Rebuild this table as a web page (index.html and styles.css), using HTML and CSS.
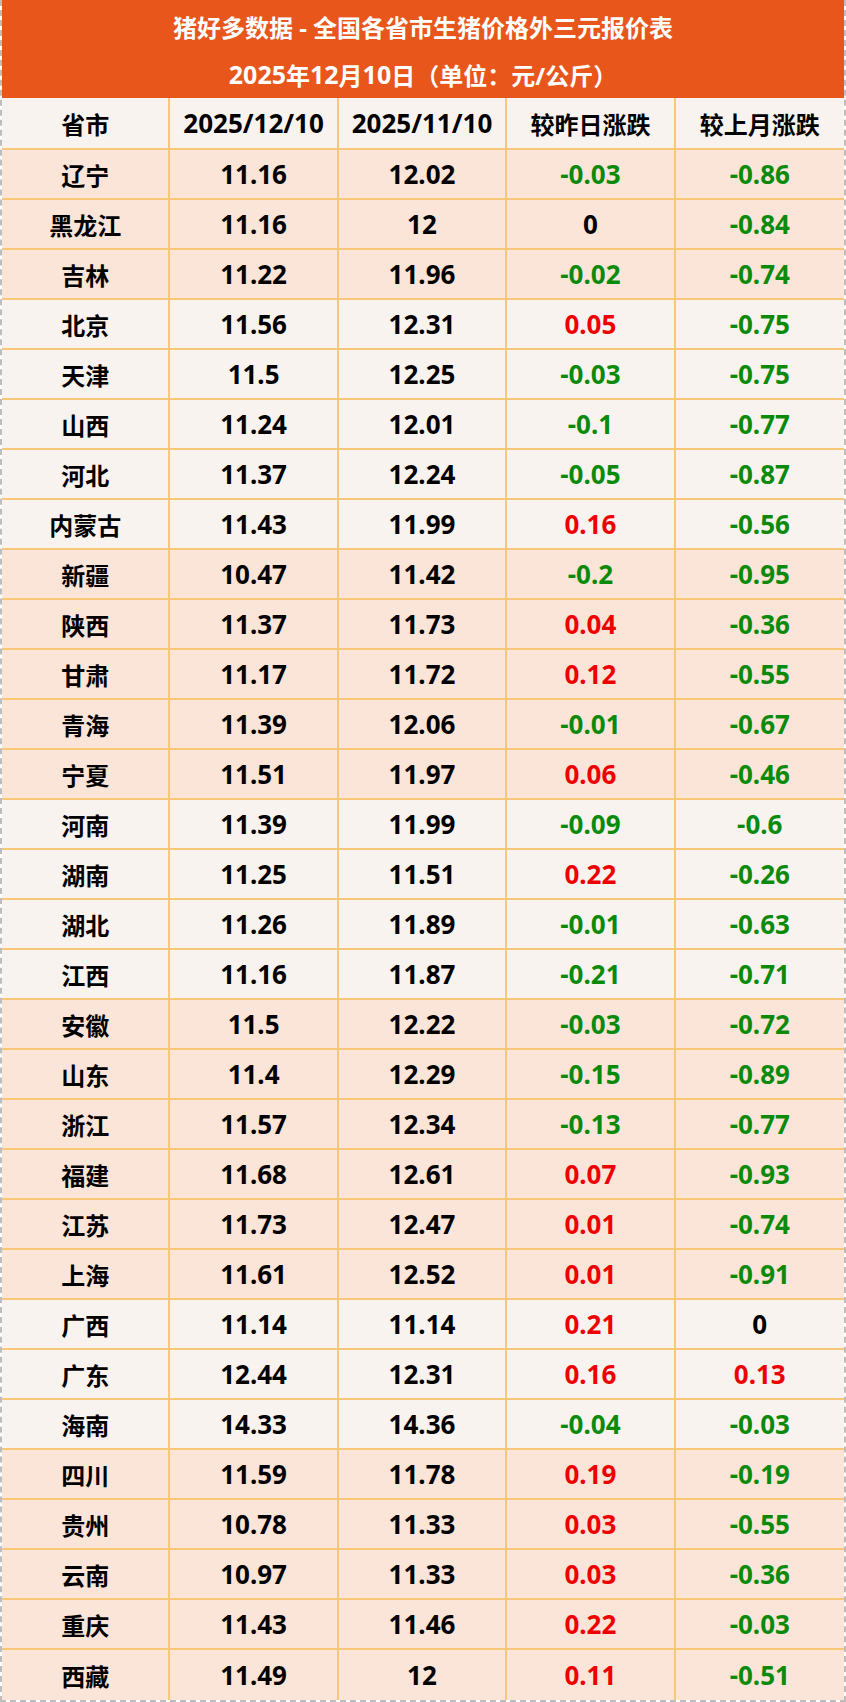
FILE: index.html
```html
<!DOCTYPE html>
<html lang="zh-CN">
<head>
<meta charset="utf-8">
<title>猪好多数据 - 全国各省市生猪价格外三元报价表</title>
<link rel="stylesheet" href="styles.css">
</head>
<body>
<div class="sheet">
  <div class="title">
    <div class="title-line">猪好多数据 - 全国各省市生猪价格外三元报价表</div>
    <div class="title-line"><span class="tnum">2025</span>年<span class="tnum">12</span>月<span class="tnum">10</span>日（单位：元/公斤）</div>
  </div>
  <div class="row head"><div class="c">省市</div><div class="c n">2025/12/10</div><div class="c n">2025/11/10</div><div class="c">较昨日涨跌</div><div class="c">较上月涨跌</div></div>
  <div class="row peach"><div class="c">辽宁</div><div class="c n">11.16</div><div class="c n">12.02</div><div class="c n neg">-0.03</div><div class="c n neg">-0.86</div></div>
  <div class="row peach"><div class="c">黑龙江</div><div class="c n">11.16</div><div class="c n">12</div><div class="c n">0</div><div class="c n neg">-0.84</div></div>
  <div class="row peach"><div class="c">吉林</div><div class="c n">11.22</div><div class="c n">11.96</div><div class="c n neg">-0.02</div><div class="c n neg">-0.74</div></div>
  <div class="row light"><div class="c">北京</div><div class="c n">11.56</div><div class="c n">12.31</div><div class="c n pos">0.05</div><div class="c n neg">-0.75</div></div>
  <div class="row light"><div class="c">天津</div><div class="c n">11.5</div><div class="c n">12.25</div><div class="c n neg">-0.03</div><div class="c n neg">-0.75</div></div>
  <div class="row light"><div class="c">山西</div><div class="c n">11.24</div><div class="c n">12.01</div><div class="c n neg">-0.1</div><div class="c n neg">-0.77</div></div>
  <div class="row light"><div class="c">河北</div><div class="c n">11.37</div><div class="c n">12.24</div><div class="c n neg">-0.05</div><div class="c n neg">-0.87</div></div>
  <div class="row light"><div class="c">内蒙古</div><div class="c n">11.43</div><div class="c n">11.99</div><div class="c n pos">0.16</div><div class="c n neg">-0.56</div></div>
  <div class="row peach"><div class="c">新疆</div><div class="c n">10.47</div><div class="c n">11.42</div><div class="c n neg">-0.2</div><div class="c n neg">-0.95</div></div>
  <div class="row peach"><div class="c">陕西</div><div class="c n">11.37</div><div class="c n">11.73</div><div class="c n pos">0.04</div><div class="c n neg">-0.36</div></div>
  <div class="row peach"><div class="c">甘肃</div><div class="c n">11.17</div><div class="c n">11.72</div><div class="c n pos">0.12</div><div class="c n neg">-0.55</div></div>
  <div class="row peach"><div class="c">青海</div><div class="c n">11.39</div><div class="c n">12.06</div><div class="c n neg">-0.01</div><div class="c n neg">-0.67</div></div>
  <div class="row peach"><div class="c">宁夏</div><div class="c n">11.51</div><div class="c n">11.97</div><div class="c n pos">0.06</div><div class="c n neg">-0.46</div></div>
  <div class="row light"><div class="c">河南</div><div class="c n">11.39</div><div class="c n">11.99</div><div class="c n neg">-0.09</div><div class="c n neg">-0.6</div></div>
  <div class="row light"><div class="c">湖南</div><div class="c n">11.25</div><div class="c n">11.51</div><div class="c n pos">0.22</div><div class="c n neg">-0.26</div></div>
  <div class="row light"><div class="c">湖北</div><div class="c n">11.26</div><div class="c n">11.89</div><div class="c n neg">-0.01</div><div class="c n neg">-0.63</div></div>
  <div class="row light"><div class="c">江西</div><div class="c n">11.16</div><div class="c n">11.87</div><div class="c n neg">-0.21</div><div class="c n neg">-0.71</div></div>
  <div class="row peach"><div class="c">安徽</div><div class="c n">11.5</div><div class="c n">12.22</div><div class="c n neg">-0.03</div><div class="c n neg">-0.72</div></div>
  <div class="row peach"><div class="c">山东</div><div class="c n">11.4</div><div class="c n">12.29</div><div class="c n neg">-0.15</div><div class="c n neg">-0.89</div></div>
  <div class="row peach"><div class="c">浙江</div><div class="c n">11.57</div><div class="c n">12.34</div><div class="c n neg">-0.13</div><div class="c n neg">-0.77</div></div>
  <div class="row peach"><div class="c">福建</div><div class="c n">11.68</div><div class="c n">12.61</div><div class="c n pos">0.07</div><div class="c n neg">-0.93</div></div>
  <div class="row peach"><div class="c">江苏</div><div class="c n">11.73</div><div class="c n">12.47</div><div class="c n pos">0.01</div><div class="c n neg">-0.74</div></div>
  <div class="row peach"><div class="c">上海</div><div class="c n">11.61</div><div class="c n">12.52</div><div class="c n pos">0.01</div><div class="c n neg">-0.91</div></div>
  <div class="row light"><div class="c">广西</div><div class="c n">11.14</div><div class="c n">11.14</div><div class="c n pos">0.21</div><div class="c n">0</div></div>
  <div class="row light"><div class="c">广东</div><div class="c n">12.44</div><div class="c n">12.31</div><div class="c n pos">0.16</div><div class="c n pos">0.13</div></div>
  <div class="row light"><div class="c">海南</div><div class="c n">14.33</div><div class="c n">14.36</div><div class="c n neg">-0.04</div><div class="c n neg">-0.03</div></div>
  <div class="row peach"><div class="c">四川</div><div class="c n">11.59</div><div class="c n">11.78</div><div class="c n pos">0.19</div><div class="c n neg">-0.19</div></div>
  <div class="row peach"><div class="c">贵州</div><div class="c n">10.78</div><div class="c n">11.33</div><div class="c n pos">0.03</div><div class="c n neg">-0.55</div></div>
  <div class="row peach"><div class="c">云南</div><div class="c n">10.97</div><div class="c n">11.33</div><div class="c n pos">0.03</div><div class="c n neg">-0.36</div></div>
  <div class="row peach"><div class="c">重庆</div><div class="c n">11.43</div><div class="c n">11.46</div><div class="c n pos">0.22</div><div class="c n neg">-0.03</div></div>
  <div class="row peach last"><div class="c">西藏</div><div class="c n">11.49</div><div class="c n">12</div><div class="c n pos">0.11</div><div class="c n neg">-0.51</div></div>
</div>
</body>
</html>
```

FILE: styles.css
```css
html, body {
  margin: 0;
  padding: 0;
  background: #ffffff;
}

body {
  width: 846px;
  font-family: "Noto Sans", "Noto Sans CJK SC", sans-serif;
  font-weight: 700;
  color: #000000;
}

.sheet {
  width: 846px;
  box-sizing: border-box;
  border-left: 2px dashed #bdbdbd;
  border-right: 2px dashed #bdbdbd;
  border-bottom: 2px dashed #bdbdbd;
}

.title {
  background: #e8561b;
  color: #ffffff;
  height: 98px;
  display: flex;
  flex-direction: column;
  font-size: 24px;
}

.title-line {
  height: 49px;
  display: flex;
  align-items: center;
  justify-content: center;
  white-space: pre;
}

.title-line:first-child {
  height: 54px;
}

.title-line:last-child {
  height: 44px;
  padding-bottom: 2px;
}

.tnum {
  font-size: 25px;
}

.row {
  display: grid;
  grid-template-columns: repeat(5, 1fr);
  height: 50px;
  box-sizing: border-box;
  border-bottom: 2px solid #f8c878;
}

.row.last {
  border-bottom: none;
}

.row.head {
  height: 52px;
  background: #f9f3ef;
}

.peach {
  background: #fbe4d8;
}

.light {
  background: #f9f3ef;
}

.c {
  display: flex;
  align-items: center;
  justify-content: center;
  font-size: 24px;
  border-right: 2px solid #f8c878;
  white-space: nowrap;
}

.c.n {
  font-size: 26px;
}

.c:last-child {
  border-right: none;
}

.neg {
  color: #0a8a0a;
}

.pos {
  color: #ee0000;
}
```
